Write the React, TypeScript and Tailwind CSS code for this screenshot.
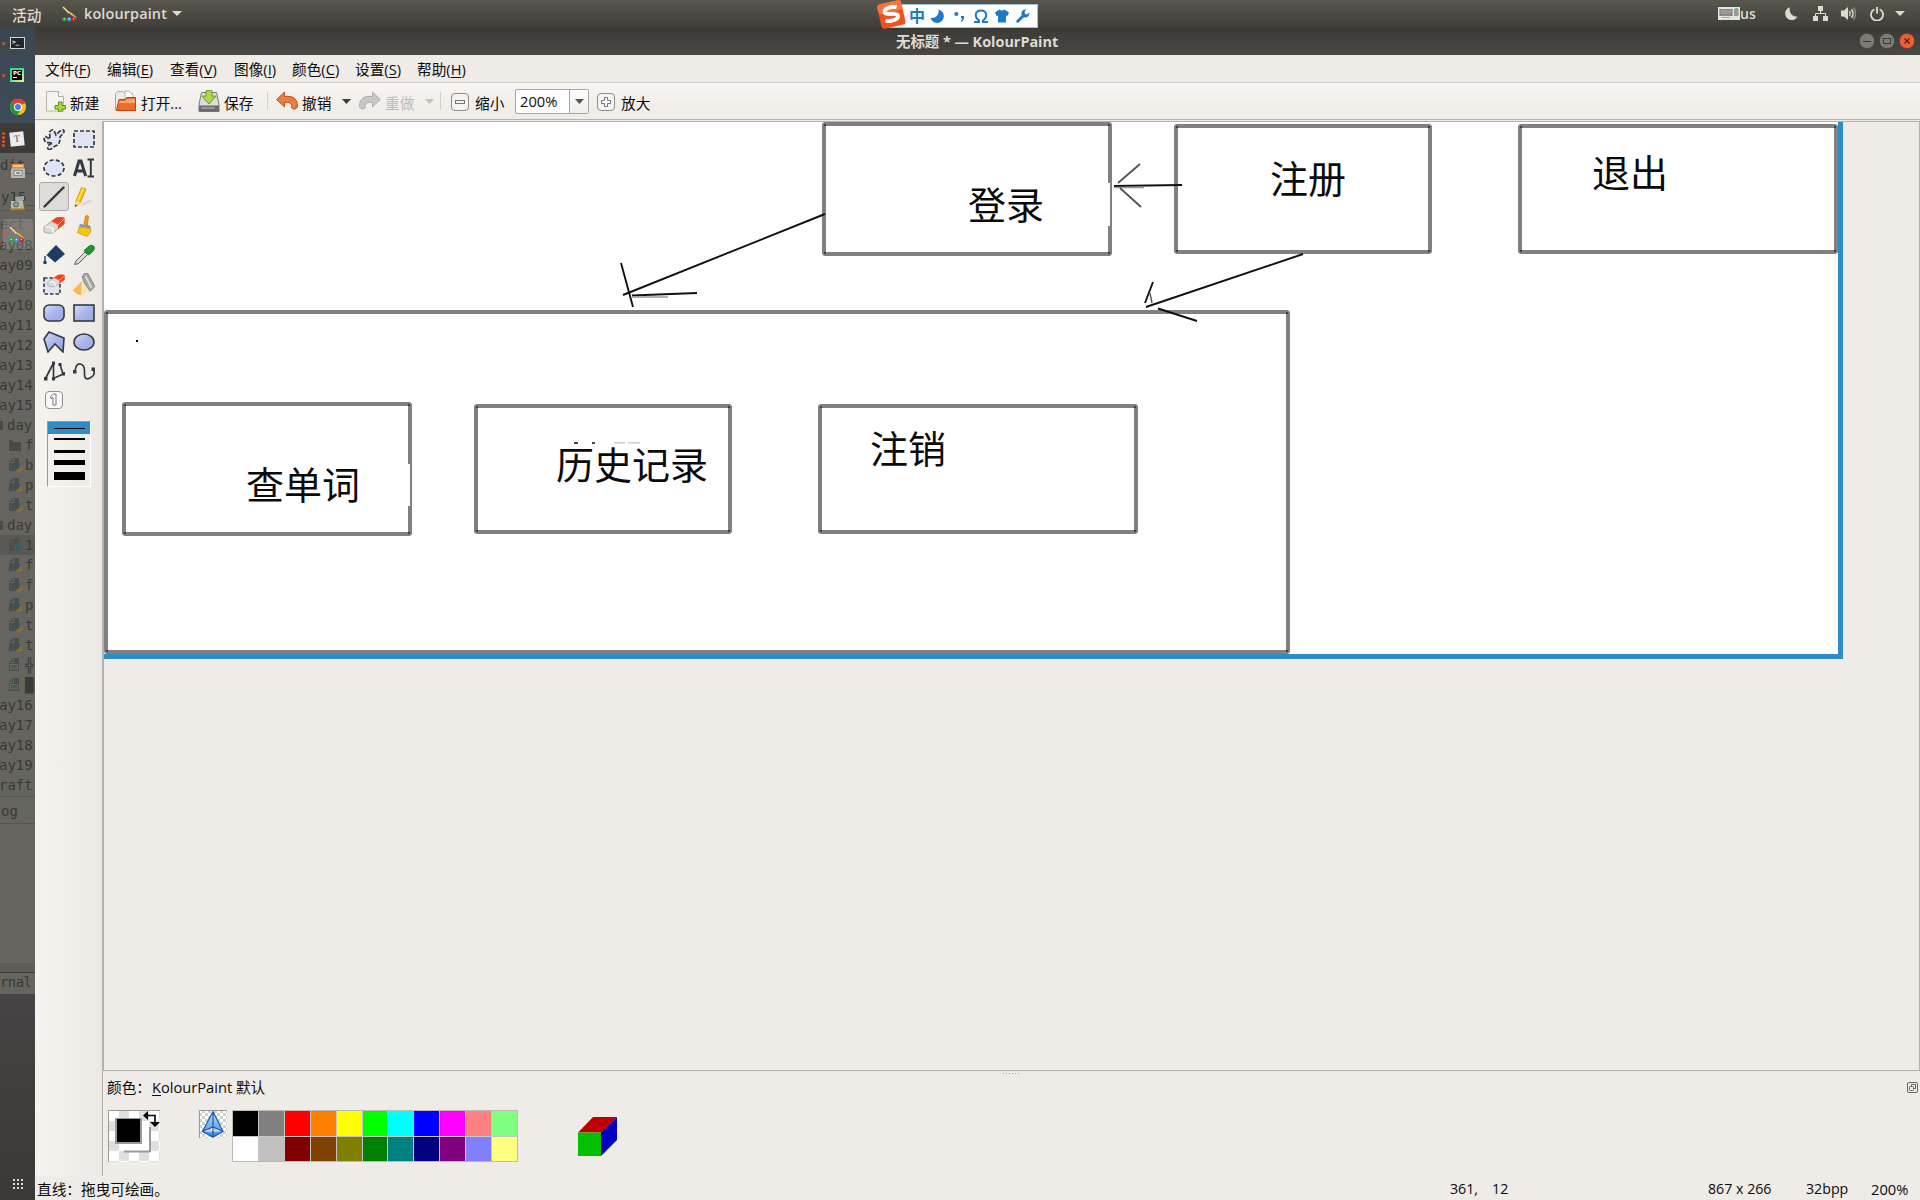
import React from "react";

type Kids = { children?: React.ReactNode };

const Icon = ({ size = 22, vb = 22, children }: Kids & { size?: number; vb?: number }) => (
  <svg width={size} height={size} viewBox={`0 0 ${vb} ${vb}`} className="block shrink-0" fill="none">
    {children}
  </svg>
);

const Brush = ({ size = 16 }: { size?: number }) => (
  <Icon size={size} vb={16}>
    <path d="M0.5 0.5l6 5 3 1 5.5 5-1.5.5-6-4z" fill="#e9b765" stroke="#7a4a20" strokeWidth=".5" />
    <path d="M1 1l6 6" stroke="#ffe49a" strokeWidth="1.4" />
    <circle cx="2.5" cy="13.3" r="2.1" fill="#12b52c" />
    <circle cx="7.2" cy="13.3" r="2.1" fill="#4a8cf0" />
    <circle cx="11.8" cy="13.3" r="2.1" fill="#d42020" />
    <circle cx="2.2" cy="12.8" r=".7" fill="#c8ffd0" />
    <circle cx="7" cy="12.8" r=".7" fill="#e0efff" />
    <circle cx="11.6" cy="12.8" r=".7" fill="#ffc8c8" />
  </Icon>
);

/* ---------- top bar ---------- */

const TopBar = () => (
  <div className="relative flex h-[27px] shrink-0 items-center bg-gradient-to-b from-[#59564e] to-[#403f3a] text-[#dfdbd2]">
    <span className="ml-[12px] w-[50px] pt-[2px] text-[14.67px] font-medium leading-[20px]">活动</span>
    <Brush />
    <span className="ml-[6px] w-[82px] text-[14.4px] font-semibold leading-[20px] tracking-[0.15px]">kolourpaint</span>
    <svg width="10" height="5" className="ml-[6px]"><path d="M0 0h10l-5 5z" fill="#dfdbd2" /></svg>
    <div className="ml-auto flex items-center">
      <svg width="22" height="13" viewBox="0 0 22 13" className="block">
        <rect width="22" height="13" fill="#e4e4e0" />
        <rect x="1.5" y="2" width="13" height="7" fill="#777" />
        <path d="M2 4h12M2 6h12M4 2v7M6 2v7M8 2v7M10 2v7M12 2v7" stroke="#bbb" strokeWidth=".6" />
        <rect x="16" y="2" width="4.5" height="7" fill="#999" />
        <path d="M4 10.5h8" stroke="#aaa" />
        <rect x="17" y="1" width="3" height="1" fill="#5bd05b" />
      </svg>
      <span className="w-[45px] text-[14px] font-semibold leading-[20px]">us</span>
      <Icon size={13} vb={13}><path d="M5 .3A6.500 6.500 0 1 0 12.500 9.500A7 7 0 0 1 5 .3z" fill="#dfdbd2" /></Icon>
      <div className="w-[15px]" />
      <Icon size={15} vb={15}>
        <path d="M5 0h5v5H5zM0 10h5v5H0zM10 10h5v5h-5z" fill="#dfdbd2" />
        <path d="M7.500 5v2.500M2.500 10V7.500h10V10" stroke="#dfdbd2" />
      </Icon>
      <div className="w-[13px]" />
      <Icon size={15} vb={15}>
        <path d="M0 4.500h3l4-3.500v13l-4-3.500H0z" fill="#dfdbd2" />
        <path d="M8.500 5q1.500 2.500 0 5M10.500 3.200q3 4.300 0 8.600" stroke="#dfdbd2" strokeWidth="1.500" />
        <path d="M12.500 1.500q4 6 0 12" stroke="#8c8a83" strokeWidth="1.500" />
      </Icon>
      <div className="w-[14px]" />
      <Icon size={14} vb={14}>
        <path d="M4.300 2.200a6 6 0 1 0 5.400 0" stroke="#dfdbd2" strokeWidth="1.800" />
        <path d="M7 0v6.500" stroke="#dfdbd2" strokeWidth="1.800" />
      </Icon>
      <svg width="10" height="5" className="ml-[11px] mr-[15px]"><path d="M0 0h10l-5 5z" fill="#dfdbd2" /></svg>
    </div>

    <div className="absolute left-[877px] top-[1px] z-10 h-[28px] w-[162px]">
      <div className="ml-[10px] mt-[3px] flex h-[24px] w-[151px] items-center border border-[#a9c2d6] bg-[#fbfdff] text-[#1f78c8]">
        <span className="ml-[21px] w-[21px] text-[16px] font-bold leading-[20px]">中</span>
        <Icon size={14} vb={14}><path d="M8.500.5A6.800 6.800 0 1 1 .5 9A7 7 0 0 0 8.500.5z" fill="#1f78c8" /></Icon>
        <div className="w-[10px]" />
        <Icon size={12} vb={12}>
          <circle cx="2.300" cy="4" r="2" fill="#1f78c8" />
          <path d="M7 6h3v2.500q-.5 2.500-3 3v-1.200q1.300-.5 1.300-1.800H7z" fill="#1f78c8" />
        </Icon>
        <div className="w-[8px]" />
        <Icon size={14} vb={14}><path d="M0 13h5v-1.500C0 8 1 1.500 7 1.500s7 6.500 2 10V13h5" stroke="#1f78c8" strokeWidth="2" /></Icon>
        <div className="w-[7px]" />
        <Icon size={14} vb={14}><path d="M4.500.5q2.500 2 5 0L14 3.500 12.500 7l-1.500-.5V13.500H3V6.500L1.500 7 0 3.500z" fill="#1f78c8" /></Icon>
        <div className="w-[7px]" />
        <Icon size={14} vb={14}>
          <path d="M1.800 12.200L8 6" stroke="#1f78c8" strokeWidth="3" strokeLinecap="round" />
          <path d="M13.300 3.500a4 4 0 1 1-3-3L8.500 3l.5 2 2 .5z" fill="#1f78c8" />
        </Icon>
      </div>
      <svg width="29" height="29" viewBox="0 0 29 29" className="absolute left-0 top-[-1px]">
        <g transform="rotate(-13 14 14)">
          <rect x="2" y="2" width="24.500" height="25" rx="3" fill="#f4511e" />
          <rect x="2" y="2" width="24.500" height="10" rx="3" fill="#fa7440" />
          <path d="M21 8.500C17 6.500 8 6.500 8.200 11c.2 4 12.300 2.200 12.300 6.300 0 4.200-9 4-13.500 2" stroke="#fff" strokeWidth="3.800" fill="none" />
        </g>
      </svg>
    </div>
  </div>
);

/* ---------- dock ---------- */

const GhostIcon = ({ kind }: { kind: string }) => (
  <svg width="14" height="15" viewBox="0 0 14 15" className="mr-[2px] block">
    {kind === "dir" && <path d="M-2 2h5l1.500 2H12v9H-2z" fill="#4a4a46" />}
    {kind !== "dir" && <path d="M5 0h5v13H0V5h5zM0 4l4-4v4z" fill="#4d4e4c" />}
    {kind === "py" && (
      <>
        <path d="M5 9q-1-4 3-4 3 0 3 3l-3 1z" fill="#35545f" />
        <path d="M13 7q2 6-3 7-3 0-3-2l4-2z" fill="#83702f" />
      </>
    )}
    {kind === "cfg" && <circle cx="9.500" cy="9.500" r="3" stroke="#39606a" strokeWidth="2.400" fill="none" />}
    {kind === "img" && <path d="M1.500 6.500h7v4.500h-7z" fill="#3f5f5a" stroke="#6b6c62" />}
  </svg>
);

const ghostRows: [string, string?][] = [
  ["ay08"], ["ay09"], ["ay10"], ["ay10"], ["ay11"], ["ay12"], ["ay13"], ["ay14"], ["ay15"],
  ["day", "open"], ["f", "dir"], ["b", "py"], ["p", "py"], ["t", "py"], ["day", "open"],
  ["1", "cfg"], ["f", "py"], ["f", "py"], ["p", "py"], ["t", "py"], ["t", "py"], ["╬", "img"], ["█", "img"],
  ["ay16"], ["ay17"], ["ay18"], ["ay19"], ["raft"],
];

const Dock = () => (
  <div className="relative w-[35px] shrink-0 overflow-hidden bg-[#65645e] font-['DejaVu_Sans_Mono',monospace] text-[14px] text-[#3a3a36]">
    <div className="absolute inset-0 flex flex-col whitespace-pre leading-[20px]">
      <div className="h-[96px] shrink-0 bg-gradient-to-b from-[#3c4650] to-[#3d4c59]" />
      <div className="h-[30px] shrink-0 bg-[#3c3b37]" />
      <div className="h-[32px] shrink-0 pt-[2px]">{"dit_"}</div>
      <div className="h-[26px] shrink-0 border-b border-[#575650] pl-[1px] pt-[2px]">y15_</div>
      <div className="h-[24px] shrink-0 pt-[3px] text-[#4c4b47]">ect</div>
      {ghostRows.map(([t, k], i) => (
        <div key={i} className={"flex h-[20px] shrink-0 items-center " + (k === "cfg" ? "bg-[#5a5953]" : "")}>
          {k === "open" && <div className="mr-[4px] h-[9px] w-[3px] bg-[#4a4a46]" />}
          {k && k !== "open" && <div className="ml-[9px]"><GhostIcon kind={k} /></div>}
          <span className={k ? "" : "-ml-px"}>{t}</span>
        </div>
      ))}
      <div className="mt-px h-[28px] shrink-0 border-y border-[#565550] pl-[1px] pt-[4px]">og</div>
      <div className="h-[139px] shrink-0" />
      <div className="h-[10px] shrink-0 border-b border-[#3f3e3a] bg-[#5d5c56]" />
      <div className="h-[21px] shrink-0 leading-[18px] tracking-[-0.6px]">rnal</div>
      <div className="flex-1 bg-gradient-to-b from-[#464444] to-[#3a3936]" />
    </div>

    <div className="relative flex h-full flex-col items-center">
      <div className="flex h-[32px] w-full items-center gap-[5px] pl-[2px]">
        <div className="h-[3px] w-[3px] rounded-full bg-[#e95420]" />
        <div className="flex h-[12px] w-[15px] items-start border border-[#d3d3d0] bg-[#23262a] pl-px font-bold leading-[8px] text-white text-[6px]">&gt;_</div>
      </div>
      <div className="flex h-[32px] w-full items-center gap-[5px] pl-[2px]">
        <div className="h-[3px] w-[3px] rounded-full bg-[#e95420]" />
        <div className="flex h-[14px] w-[14px] items-center justify-center bg-gradient-to-br from-[#21d789] via-[#40dfa0] to-[#fcf84a]">
          <div className="flex h-[10px] w-[10px] flex-col items-start bg-black pl-px font-['DejaVu_Sans',sans-serif] text-[5.5px] font-bold leading-[6px] text-white">
            PC
            <div className="mt-px h-px w-[4px] bg-white" />
          </div>
        </div>
      </div>
      <div className="flex h-[32px] items-center">
        <Icon size={16} vb={16}>
          <circle cx="8" cy="8" r="8" fill="#fbc116" />
          <path d="M8 8L1.100 4A8 8 0 0 1 14.900 4z" fill="#e33b2e" />
          <path d="M8 8L1.100 4A8 8 0 0 0 7.500 16l3.500-6z" fill="#229342" />
          <circle cx="8" cy="8" r="4" fill="#fff" />
          <circle cx="8" cy="8" r="3" fill="#3f7fe8" />
        </Icon>
      </div>
      <div className="flex h-[32px] w-full items-center gap-[5px] pl-[2px]">
        <div className="flex flex-col gap-px">
          <div className="h-[3px] w-[3px] rounded-full bg-[#e95420]" />
          <div className="h-[3px] w-[3px] rounded-full bg-[#e95420]" />
          <div className="h-[3px] w-[3px] rounded-full bg-[#e95420]" />
          <div className="h-[3px] w-[3px] rounded-full bg-[#e95420]" />
        </div>
        <div className="flex h-[14px] w-[14px] -rotate-6 items-center justify-center bg-[#ececec] font-['Liberation_Serif',serif] text-[10px] leading-none text-[#555]">T</div>
      </div>
      <div className="flex h-[32px] items-center">
        <Icon size={14} vb={14}>
          <path d="M1 0h12v5H1z" fill="#e58a3a" /><path d="M2 1.500h10v1H2z" fill="#fff" />
          <path d="M0 4.500h14v9.500H0z" fill="#b5b5b2" /><path d="M3 6.500h8v5H3z" fill="#d8d8d6" stroke="#777" strokeWidth=".8" /><path d="M5 9h4" stroke="#444" />
        </Icon>
      </div>
      <div className="flex h-[32px] items-center">
        <Icon size={15} vb={15}>
          <path d="M5 1l9-1v4l-3 2H6z" fill="#9aa6a4" /><path d="M1 5h12l1 8H1z" fill="#bdb9a0" />
          <path d="M0 13.500h15" stroke="#a07c22" strokeWidth="2" /><circle cx="6" cy="8.500" r="2.500" fill="#8fa09f" stroke="#55605e" />
        </Icon>
      </div>
      <div className="flex h-[30px] w-[30px] items-center justify-center rounded-[3px] bg-white/15"><Brush size={17} /></div>
      <div className="mb-[11px] mt-auto grid grid-cols-3 gap-[2px]">
        {Array.from({ length: 9 }, (_, i) => <div key={i} className="h-[2px] w-[2px] bg-[#dddad3]" />)}
      </div>
    </div>
    <div className="absolute left-[2px] top-[206px] h-[3px] w-[3px] rounded-full bg-[#e95420]" />
  </div>
);

/* ---------- title / menu / toolbar ---------- */

const TitleBar = () => (
  <div className="flex h-[28px] shrink-0 items-center bg-gradient-to-b from-[#3b3a36] to-[#4a4843] text-[#dfdbd2]">
    <span className="ml-[861px] whitespace-pre pt-[2px] text-[14.4px] font-bold leading-[20px]">无标题 * — KolourPaint</span>
    <div className="ml-auto mr-[5px] flex gap-[4px]">
      <Icon size={16} vb={16}><circle cx="8" cy="8" r="7.700" fill="#7d7b74" stroke="#35342f" strokeWidth=".6" /><path d="M4 8.500h8" stroke="#3c3b37" /></Icon>
      <Icon size={16} vb={16}><circle cx="8" cy="8" r="7.700" fill="#7d7b74" stroke="#35342f" strokeWidth=".6" /><rect x="4.500" y="5.500" width="7" height="5" stroke="#3c3b37" /></Icon>
      <Icon size={16} vb={16}><circle cx="8" cy="8" r="7.700" fill="#ee5f33" stroke="#35342f" strokeWidth=".6" /><path d="M5.500 5.500l5 5m0-5l-5 5" stroke="#4a2418" strokeWidth="1.300" /></Icon>
    </div>
  </div>
);

const Menu = ({ w, t, k }: { w: string; t: string; k: string }) => (
  <span className={"shrink-0 whitespace-nowrap " + w}>{t}(<span className="underline decoration-1 underline-offset-2">{k}</span>)</span>
);

const MenuBar = () => (
  <div className="flex h-[28px] shrink-0 items-center border-b border-[#cfcbc7] bg-[#efebe7] pl-[10px] pt-px leading-[20px]">
    <Menu w="w-[62px]" t="文件" k="F" />
    <Menu w="w-[63px]" t="编辑" k="E" />
    <Menu w="w-[64px]" t="查看" k="V" />
    <Menu w="w-[58px]" t="图像" k="I" />
    <Menu w="w-[63px]" t="颜色" k="C" />
    <Menu w="w-[62px]" t="设置" k="S" />
    <Menu w="w-[62px]" t="帮助" k="H" />
  </div>
);

const Down = ({ c }: { c: string }) => <svg width="9" height="5" className="block shrink-0"><path d="M0 0h9L4.500 5z" fill={c} /></svg>;

const CurvedArrow = ({ a, b }: { a: string; b: string }) => (
  <path d="M0.700 9.500L8.500 2v4.500c8-1 13 2 13 9.500-.3 2.500-2 3-3.500 3-2.500 0-3-2-2-3.500-.8-3-3.500-3.500-7.500-3.200V17z" fill={a} stroke={b} />
);

const ToolBar = () => (
  <div className="flex h-[37px] shrink-0 items-center border-b border-[#b5b1ad] bg-gradient-to-b from-[#f7f4f1] to-[#efebe7] pl-[10px] leading-[20px]">
    <Icon>
      <path d="M1.500 1.500h12l5 5v14.500h-17z" fill="#f3f3f1" stroke="#b4b4b0" /><path d="M13.500 1.500v5h5" fill="#fff" stroke="#aaa" />
      <path d="M13.500 12h3.500v3.500h3.500V19H17v3h-3.500v-3H10v-3.500h3.500z" fill="#a4dc3c" stroke="#5c8e10" />
    </Icon>
    <span className="ml-[3px] w-[44px] shrink-0 pt-[4px]">新建</span>
    <Icon>
      <path d="M1.500 20V3.500l2-2h5l2 2h8V12z" fill="#ecebe8" stroke="#aaa8a4" /><path d="M11 1h4l4 4v6h-8z" fill="#fff" stroke="#b8b8b8" />
      <path d="M2.500 20.500L5 9.500h6l1.500-2h9V20.500z" fill="#f06a28" stroke="#c0400c" /><path d="M5.500 11h6l1.500-2h8v4H5z" fill="#f9a577" />
    </Icon>
    <span className="ml-[5px] w-[57px] shrink-0 pt-[4px]">打开...</span>
    <Icon>
      <path d="M3.500 2.500h15L21 14v7.500H1V14z" fill="#dcdcda" stroke="#7c7c7a" /><path d="M1 15.500h20v6H1z" fill="#6b6b6b" /><path d="M3 17h14v2H3z" fill="#999" />
      <path d="M8 .7h6v5.500h4L11 14 4 6.200h4z" fill="#a9dc4c" stroke="#6a9c20" />
    </Icon>
    <span className="ml-[4px] w-[43px] shrink-0 pt-[4px]">保存</span>
    <div className="h-[18px] w-px bg-[#d3cfcb]" />
    <div className="w-[8px]" />
    <Icon><CurvedArrow a="#ef7d3f" b="#b8511c" /></Icon>
    <span className="ml-[4px] w-[40px] shrink-0 pt-[4px]">撤销</span>
    <Down c="#3c3b39" />
    <div className="w-[8px]" />
    <Icon><g transform="translate(22 0) scale(-1 1)"><CurvedArrow a="#c9c7c5" b="#b0aeac" /></g></Icon>
    <span className="ml-[4px] w-[40px] shrink-0 pt-[4px] text-[#bfbcb9]">重做</span>
    <Down c="#c4c1be" />
    <div className="w-[6px]" />
    <div className="h-[18px] w-px bg-[#d3cfcb]" />
    <div className="ml-[10px] mt-[2px] flex h-[18px] w-[18px] items-center justify-center rounded-[4px] border border-[#8c8c8a] bg-[#f4f3f1]"><div className="h-[4px] w-[10px] border border-[#777]" /></div>
    <span className="ml-[6px] w-[40px] shrink-0 pt-[4px]">缩小</span>
    <div className="mt-px flex h-[25px] w-[74px] shrink-0 rounded-[2px] border border-[#a9a5a1] bg-white">
      <span className="w-[53px] pl-[4px] leading-[23px]">200%</span>
      <div className="flex flex-1 items-center justify-center border-l border-[#a9a5a1] bg-gradient-to-b from-white to-[#efecea]"><Down c="#555" /></div>
    </div>
    <div className="ml-[8px] mt-[2px] flex h-[18px] w-[18px] items-center justify-center rounded-[4px] border border-[#8c8c8a] bg-[#f4f3f1]">
      <Icon size={12} vb={12}><path d="M4.500 1.500h3v3h3v3h-3v3h-3v-3h-3v-3h3z" fill="#fff" stroke="#777" /></Icon>
    </div>
    <span className="ml-[6px] shrink-0 pt-[4px]">放大</span>
  </div>
);

/* ---------- toolbox ---------- */

const Eraser = () => (
  <>
    <path d="M1 12L13 3q6-1 8 0v6L10 18q-6 1-9-1z" fill="#d9d9d8" stroke="#9b9b98" strokeWidth=".8" />
    <path d="M8 6.500L13.500 2.500q5-1 8 .5v6L15 14v-4z" fill="#f4431c" />
    <path d="M8 6.500l7 3.500 6-6" stroke="#ffb39c" strokeWidth="1" />
    <path d="M2 12q5-1 8 2v4" stroke="#fff" strokeWidth="1.200" />
  </>
);

const dark = "#343a42";
const tools: React.ReactNode[] = [
  <path d="M7.500 21.500Q3.500 22 5 17.500L9.500 15 3 14.500Q-.5 11 2.500 8.500L7 11 6.500 4Q9 .5 11 2.500L13 7 17 3Q21.500 .5 21 4L17 9Q17.500 17 12 18z" fill="#e1e5f4" stroke={dark} strokeWidth="1.700" strokeDasharray="4.500 1.600" />,
  <rect x="1" y="3" width="20" height="16" fill="#dfe3f4" stroke={dark} strokeWidth="1.700" strokeDasharray="4 2" />,
  <ellipse cx="11" cy="11" rx="10" ry="8" fill="#dfe3f4" stroke={dark} strokeWidth="1.700" strokeDasharray="4 2.300" />,
  <>
    <path d="M1.500 19L6 4h2l4.700 15M3.500 14h7" stroke={dark} strokeWidth="3" />
    <path d="M14.500 2.500h6.500M14.500 19.500h6.500M17.800 2.500v17" stroke={dark} strokeWidth="2" />
  </>,
  <path d="M1.500 20.500L20.500 1.500" stroke="#33383b" strokeWidth="2.400" strokeLinecap="round" />,
  <>
    <path d="M6 19l10-5 4 .5-9 5z" fill="#d9d5d1" />
    <path d="M2 21l1-6L8.500 1.500l4.500 1.500L7.500 16.500z" fill="#fcb900" stroke="#d08e00" strokeWidth=".7" /><path d="M2 21l1-6 4.500 1.500z" fill="#f3dcb4" /><path d="M2 21l.5-2.500 1.700 1z" fill="#333" /><path d="M5.200 14.500L10.300 2.500" stroke="#ffee50" strokeWidth="1.600" />
  </>,
  <Eraser />,
  <>
    <path d="M11 9l1.500-8q1.500-1 3 0l-1 9z" fill="#ee9a26" stroke="#b86a0a" strokeWidth=".6" />
    <path d="M7 9l10 1.500 1 3-12-2z" fill="#8b8fa8" /><path d="M6 12l12 2q0 4-4 7.500l-10-4q2-2 2-5.500z" fill="#fbc50a" stroke="#c38c00" strokeWidth=".6" />
  </>,
  <>
    <path d="M3 11q2-1 4-4l6-6 9 9-10 8.500-8-7z" fill="#1e3c66" /><path d="M2 12v5" stroke="#1e3c66" strokeWidth="1.400" /><circle cx="2" cy="18.500" r="1.800" fill="#1e3c66" />
  </>,
  <>
    <path d="M1.500 20.500L3 17l9-9 2.500 2.500-9 9z" fill="#d5dcdf" stroke="#5b6266" />
    <path d="M11 6.500l4.500 4.500 2-1.500q5-4 3.500-7-3-3-7 1.500z" fill="#1e9a2b" stroke="#0c5f17" strokeWidth=".8" />
  </>,
  <>
    <rect x="1" y="5" width="16" height="16" fill="#dfe3f4" stroke={dark} strokeWidth="1.600" strokeDasharray="3.500 2" />
    <g transform="translate(4 0) scale(.82 .75)"><Eraser /></g>
  </>,
  <>
    <path d="M9 8L0 17q3 5 8 5z" fill="#fbb845" /><path d="M9 8q3 4 2 9l-3 5 6-3-2-11z" fill="#fde0a0" />
    <path d="M9 4l2-3.500h4l7 13-5 5-6-9z" fill="#a5a39c" stroke="#77756d" strokeWidth=".6" /><path d="M12.500 3l6 12" stroke="#dad9d2" strokeWidth="2" />
  </>,
  <rect x="1" y="3" width="20" height="16" rx="5" fill="url(#blue)" stroke={dark} strokeWidth="1.600" />,
  <rect x="1" y="3" width="20" height="16" fill="url(#blue)" stroke={dark} strokeWidth="1.600" />,
  <path d="M6 1l15 6-1 14L12 13 5 21 1 8z" fill="url(#blue)" stroke={dark} strokeWidth="1.600" />,
  <ellipse cx="11" cy="11" rx="10" ry="8" fill="url(#blue)" stroke={dark} strokeWidth="1.600" />,
  <>
    <path d="M2.500 18.500L10.500 3v15.500l9.500-4.500-3-9.500" stroke={dark} strokeWidth="1.700" />
    <path d="M1 17h3.500v3.500H1zM9 1.500h3V5H9zM9 17h3v3.500H9zM19 12h3v3.500h-3zM15.500 3h3v3h-3z" fill={dark} />
  </>,
  <>
    <path d="M2 11Q3 3 7.500 4t4 9 5.500 5 3.500-8" stroke={dark} strokeWidth="1.700" />
    <path d="M0 10h3.500v3.500H0zM18.500 7.500H22V11h-3.500z" fill={dark} />
  </>,
  <>
    <rect x="2.500" y="2.500" width="17" height="17" rx="3.500" fill="#f9f8f6" stroke="#8f8f8d" />
    <path d="M7.500 7.500l3-2.500h2.500v11H10V8.500L8 9.500z" fill="#fff" stroke="#777" />
  </>,
];

const ToolBox = () => (
  <div className="flex w-[67px] shrink-0 flex-col bg-gradient-to-r from-[#f7f4ef] to-[#ece9e4] pl-[4px] pt-[3px]">
    <svg width="0" height="0" className="absolute">
      <defs>
        <linearGradient id="blue" x1="0" y1="0" x2="1" y2="1">
          <stop offset="0" stopColor="#d5dcfa" /><stop offset=".5" stopColor="#aab6ea" /><stop offset="1" stopColor="#96a6e4" />
        </linearGradient>
      </defs>
    </svg>
    <div className="grid w-[60px] grid-cols-2">
      {tools.map((t, i) => (
        <div key={i} className={"flex h-[29px] items-center justify-center rounded-[3px] " + (i === 4 ? "border border-[#b0aca8] bg-[#dedad7]" : "")}>
          <Icon>{t}</Icon>
        </div>
      ))}
    </div>
    <div className="ml-[8px] mt-[7px] flex h-[66px] w-[44px] flex-col items-center border border-b-white border-l-[#9c9894] border-r-white border-t-[#9c9894]">
      <div className="flex h-[12px] w-full shrink-0 items-center justify-center bg-[#308cc6]"><div className="h-px w-[31px] bg-black" /></div>
      <div className="mt-[4px] h-[2px] w-[31px] bg-black" />
      <div className="mt-[10px] h-[3px] w-[31px] bg-black" />
      <div className="mt-[7px] h-[5px] w-[31px] bg-black" />
      <div className="mt-[7px] h-[8px] w-[31px] bg-black" />
    </div>
  </div>
);

/* ---------- drawing ---------- */

/* Outer bounds of each box, in screen pixels relative to the sheet. */
const boxes = [
  [718, 0, 290, 134], [1070, 2, 258, 130], [1414, 2, 320, 130],
  [0, 188, 1186, 344], [18, 280, 290, 134], [370, 282, 258, 130], [714, 282, 320, 130],
];

const labels: [number, number, string][] = [
  [864, 97, "登录"], [1166, 71, "注册"], [1488, 65, "退出"],
  [142, 377, "查单词"], [452, 357, "历史记录"], [766, 341, "注销"],
];

const Sheet = () => (
  <div className="h-[537px] w-[1739px] border-b-[5px] border-r-[5px] border-[#308cc6] bg-white">
    <svg width="1734" height="532" className="block" fill="none">
      {boxes.map(([x, y, w, h], i) => (
        <g key={i}>
          <rect x={x + 2} y={y + 2} width={w - 4} height={h - 4} stroke="#808080" strokeWidth="4" strokeLinejoin="bevel" />
          {[[x + 2, y + 2], [x + w - 4, y + 2], [x + 2, y + h - 4], [x + w - 4, y + h - 4]].map(([a, b], j) => (
            <rect key={j} x={a} y={b} width="2" height="2" fill="#404040" />
          ))}
        </g>
      ))}
      <path d="M1004 61h2v43h-2zM304 342h2v42h-2z" fill="#fff" />
      <path d="M32 218h2v2h-2z" fill="#000" />
      <path d="M470 320h4v2h-4zM488 320h3v2h-3z" fill="#444" />
      <path d="M510 320h11v1.500h-11zM524 320h12v1.500h-12z" fill="#ccc" />
      <g stroke="#111" strokeWidth="1.900">
        <path d="M721 92L519 173M517 141l12 44M528 173.500l65-2.500M1010 64l68-1M1199 132L1042 185M1049 160l-8 21M1054 186.500l39 12.500" />
      </g>
      <path d="M1010 65.500h30M528 175h36" stroke="#999" strokeWidth="1.500" />
      <g stroke="#555" strokeWidth="1.900">
        <path d="M1014 61l22-19M1016 66l21 19" />
        <path d="M1046 171l2 10" strokeWidth="1.400" />
      </g>
      <g fill="#0a0a0a" fontSize="38" fontFamily="'Noto Sans CJK SC', sans-serif">
        {labels.map(([x, y, t]) => <text key={t} x={x} y={y}>{t}</text>)}
      </g>
    </svg>
  </div>
);

/* ---------- colours ---------- */

const rowA = ["#000000", "#808080", "#ff0000", "#ff8000", "#ffff00", "#00ff00", "#00ffff", "#0000ff", "#ff00ff", "#ff8080", "#80ff80"];
const rowB = ["#ffffff", "#c0c0c0", "#800000", "#804000", "#808000", "#008000", "#008080", "#000080", "#800080", "#8080ff", "#ffff80"];

const ColorPanel = () => (
  <div className="flex flex-1 flex-col border-l border-[#b5b1ad] pl-[4px]">
    <div className="flex h-[4px] justify-center gap-[2px] pr-[6px] pt-[2px]">
      {Array.from({ length: 6 }, (_, i) => <div key={i} className="h-px w-px bg-[#a9a5a1]" />)}
    </div>
    <div className="mt-[2px] flex h-[20px] items-center justify-between pr-[2px] leading-[20px]">
      <span className="whitespace-pre">颜色：<span className="ml-px underline decoration-1 underline-offset-2">K</span>olourPaint 默认</span>
      <Icon size={11} vb={11}>
        <rect x=".5" y=".5" width="10" height="10" rx="1.500" stroke="#666" /><rect x="2.500" y="4.500" width="4" height="4" rx="1" stroke="#666" /><path d="M4.500 4V2.500h4v4H7" stroke="#666" />
      </Icon>
    </div>
    <div className="mt-[13px] flex items-start">
      <svg width="52" height="52" className="ml-px block">
        <defs>
          <pattern id="chk" width="20" height="20" patternUnits="userSpaceOnUse" x="1" y="1">
            <rect width="20" height="20" fill="#fff" /><path d="M10 0h10v10H10zM0 10h10v10H0z" fill="#e0e0e0" />
          </pattern>
        </defs>
        <rect width="52" height="52" fill="url(#chk)" />
        <path d="M.5 52V.5H52" stroke="#9c9894" fill="none" />
        <path d="M17 17h24v24H17z" fill="#fff" /><path d="M16 41.500h26M42 17v25" stroke="#9a9a96" strokeWidth="2" />
        <path d="M7 8h27v26H7z" fill="#9a9a96" /><path d="M9 9h23v23H9z" fill="#000" />
        <path d="M39 5.500h8v7" stroke="#000" strokeWidth="1.600" fill="none" /><path d="M35 5.500l5-4.500v9zM42 12h10l-5 5z" fill="#000" />
      </svg>
      <svg width="28" height="28" className="ml-[39px] block">
        <defs>
          <pattern id="chs" width="6" height="6" patternUnits="userSpaceOnUse">
            <rect width="6" height="6" fill="#fff" /><path d="M3 0h3v3H3zM0 3h3v3H0z" fill="#cfcfcf" />
          </pattern>
          <linearGradient id="tri" x1="0" y1="0" x2="0" y2="1"><stop offset="0" stopColor="#bfe0ff" /><stop offset="1" stopColor="#3f8de0" /></linearGradient>
        </defs>
        <rect width="28" height="28" fill="url(#chs)" />
        <path d="M.5 28V.5H28" stroke="#9c9894" fill="none" />
        <path d="M14 1.500L3.500 21.500l10.500 5.500 10-5.500zM14 1.500V27M3.500 21.500l10.500-4.500 10 4.500" fill="url(#tri)" stroke="#1a55b0" strokeWidth="1.200" />
      </svg>
      <div className="ml-[5px] grid h-[52px] w-[286px] grid-cols-11 gap-px border border-[#bdb9b5] bg-[#c9c5c1]">
        {[...rowA, ...rowB].map((c, i) => <div key={i} style={{ backgroundColor: c }} />)}
      </div>
      <svg width="40" height="39" className="ml-[60px] mt-[7px] block">
        <path d="M15 0h24L23 15.500H0z" fill="#c00000" /><path d="M23 15.500L39 0v23L23 39z" fill="#0000c0" /><path d="M0 15.500h23V39H0z" fill="#00c000" />
      </svg>
    </div>
  </div>
);

const StatusBar = () => (
  <div className="flex h-[24px] shrink-0 items-center whitespace-pre pl-[2px] pt-[2px] leading-[20px]">
    <span className="w-[1413px]">直线：拖曳可绘画。</span>
    <span className="w-[258px] text-[14.2px]">361,<span className="ml-[14px]">12</span></span>
    <span className="w-[98px] text-[14.2px]">867 x 266</span>
    <span className="w-[65px] text-[14.2px]">32bpp</span>
    <span className="text-[14.67px]">200%</span>
  </div>
);

export default function App() {
  return (
    <div className="flex h-[1200px] w-[1920px] flex-col overflow-hidden bg-[#efebe7] font-['Open_Sans','Noto_Sans_CJK_SC',sans-serif] text-[14.67px] text-[#0c0c0c]">
      <TopBar />
      <div className="flex min-h-0 flex-1">
        <Dock />
        <div className="flex min-w-0 flex-1 flex-col">
          <TitleBar />
          <MenuBar />
          <ToolBar />
          <div className="mt-px flex min-h-0 flex-1">
            <ToolBox />
            <div className="flex min-w-0 flex-1 flex-col">
              <div className="h-[950px] shrink-0 border border-l-2 border-[#b5b1ad]">
                <Sheet />
              </div>
              <ColorPanel />
            </div>
          </div>
          <StatusBar />
        </div>
      </div>
    </div>
  );
}
